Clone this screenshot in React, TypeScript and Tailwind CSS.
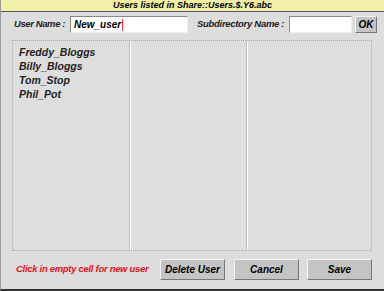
import { FC } from "react";

const font = { fontFamily: '"Liberation Sans", Arial, sans-serif' };

const Btn: FC<{ label: string; w: string }> = ({ label, w }) => (
    <div className={`${w} shrink-0 h-[21px] flex items-center justify-center bg-[#c4c4c4] border border-t-[#f4f4f4] border-l-[#f4f4f4] border-r-[#777] border-b-[#777] text-[10px] font-bold italic text-black whitespace-nowrap`}>
        {label}
    </div>
);

const App: FC = () => {
    const users = ["Freddy_Bloggs", "Billy_Bloggs", "Tom_Stop", "Phil_Pot"];
    return (
        <div style={font} className="w-[384px] h-[291px] bg-[#dddddd] flex flex-col border-l border-[#999] border-b-2 border-b-[#333] overflow-hidden">
            <div className="h-[12px] shrink-0 bg-[#f2f0a8] border-b border-[#555] flex items-center justify-center text-[9px] leading-none font-bold italic text-black whitespace-nowrap">
                Users listed in Share::Users.$.Y6.abc
            </div>
            <div className="flex items-center h-[17px] mt-[4px] pl-[13px] whitespace-nowrap">
                <span className="w-[56px] shrink-0 text-[9.5px] tracking-[-0.4px] font-bold italic text-[#222]">User Name :</span>
                <div className="w-[118px] shrink-0 h-[17px] bg-white border border-t-[#888] border-l-[#888] border-r-[#eee] border-b-[#eee] flex items-center pl-[3px] text-[10px] font-bold italic text-black">
                    New_user<span className="w-px h-[12px] bg-red-500 ml-px" />
                </div>
                <span className="ml-[9px] w-[92px] shrink-0 text-[9.5px] tracking-[-0.3px] font-bold italic text-[#222]">Subdirectory Name :</span>
                <div className="w-[63px] shrink-0 h-[17px] bg-white border border-t-[#888] border-l-[#888] border-r-[#eee] border-b-[#eee]" />
                <div className="ml-[3px] w-[22px] shrink-0 h-[17px] flex items-center justify-center bg-[#c4c4c4] border border-t-[#f4f4f4] border-l-[#f4f4f4] border-r-[#777] border-b-[#777] text-[10px] font-bold italic">
                    OK
                </div>
            </div>
            <div className="ml-[11px] mt-[7px] h-[211px] w-[360px] shrink-0 border border-dotted border-[#aaa] bg-[#dedede] grid grid-cols-[117px_117px_1fr]">
                <div className="border-r border-[#bbb] pl-[6px] pt-[4px] flex flex-col">
                    {users.map((u) => (
                        <div key={u} className="h-[14px] leading-[14px] text-[10.5px] font-bold italic text-[#222] whitespace-nowrap">{u}</div>
                    ))}
                </div>
                <div className="border-r border-[#bbb] border-l border-l-white" />
                <div className="border-l border-white" />
            </div>
            <div className="flex items-center mt-[8px] pl-[15px] whitespace-nowrap">
                <span className="text-[9.5px] tracking-[-0.3px] font-bold italic text-[#e0141e] w-[144px] shrink-0">Click in empty cell for new user</span>
                <Btn label="Delete User" w="w-[65px]" />
                <div className="w-[9px] shrink-0" />
                <Btn label="Cancel" w="w-[65px]" />
                <div className="w-[8px] shrink-0" />
                <Btn label="Save" w="w-[65px]" />
            </div>
        </div>
    );
};

export default App;
